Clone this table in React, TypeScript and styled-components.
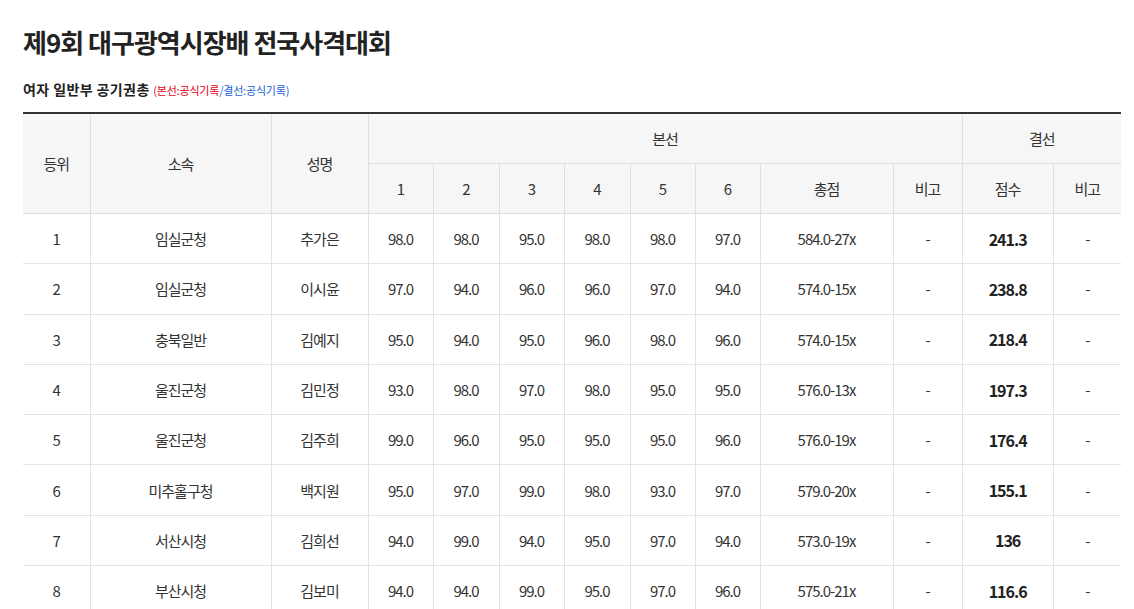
import React from "react";
import styled, { createGlobalStyle } from "styled-components";

const GlobalStyle = createGlobalStyle`
  html, body { margin: 0; padding: 0; background: #fff; }
  body { font-family: "Noto Sans CJK KR", "Noto Sans", sans-serif; color: #333; }
`;

const Page = styled.div`
  padding: 22px 13px 0 23px;
`;

const Title = styled.h1`
  margin: 0;
  font-size: 26px;
  line-height: 40px;
  font-weight: 700;
  color: #222;
  letter-spacing: -1px;
`;

const SubTitle = styled.h2`
  margin: 17px 0 0;
  font-size: 14px;
  line-height: 20px;
  font-weight: 700;
  color: #222;
  letter-spacing: 0.4px;
`;

const Note = styled.span`
  font-size: 11px;
  font-weight: 400;
  letter-spacing: -0.2px;
`;

const Colored = styled.span<{ $tone: "red" | "blue" }>`
  color: ${(p) => (p.$tone === "red" ? "#e60012" : "#1a5fd6")};
`;

const Table = styled.table`
  margin-top: 12px;
  width: 1098px;
  border-collapse: collapse;
  table-layout: fixed;
  border-top: 2px solid #333;
`;

const Th = styled.th`
  background: #f6f6f6;
  font-weight: 400;
  font-size: 15px;
  color: #333;
  letter-spacing: -1px;
  height: 49px;
  padding: 0;
  text-align: center;
  border: 1px solid #dfdfdf;
  border-top: none;
  &:first-child { border-left: none; }
  &:last-child { border-right: none; }
`;

const Td = styled.td<{ $bold?: boolean }>`
  height: 49.3px;
  padding: 0;
  text-align: center;
  font-size: ${(p) => (p.$bold ? "16px" : "15px")};
  font-weight: ${(p) => (p.$bold ? 700 : 400)};
  color: ${(p) => (p.$bold ? "#222" : "#333")};
  letter-spacing: -1px;
  border: 1px solid #e3e3e3;
  &:first-child { border-left: none; }
  &:last-child { border-right: none; }
`;

const widths = [67, 181, 97, 65, 66, 65, 66, 65, 65, 133, 69, 91, 68];

type Row = {
  rank: number;
  team: string;
  name: string;
  s: string[];
  total: string;
  score: string;
};

const rows: Row[] = [
  { rank: 1, team: "임실군청", name: "추가은", s: ["98.0", "98.0", "95.0", "98.0", "98.0", "97.0"], total: "584.0-27x", score: "241.3" },
  { rank: 2, team: "임실군청", name: "이시윤", s: ["97.0", "94.0", "96.0", "96.0", "97.0", "94.0"], total: "574.0-15x", score: "238.8" },
  { rank: 3, team: "충북일반", name: "김예지", s: ["95.0", "94.0", "95.0", "96.0", "98.0", "96.0"], total: "574.0-15x", score: "218.4" },
  { rank: 4, team: "울진군청", name: "김민정", s: ["93.0", "98.0", "97.0", "98.0", "95.0", "95.0"], total: "576.0-13x", score: "197.3" },
  { rank: 5, team: "울진군청", name: "김주희", s: ["99.0", "96.0", "95.0", "95.0", "95.0", "96.0"], total: "576.0-19x", score: "176.4" },
  { rank: 6, team: "미추홀구청", name: "백지원", s: ["95.0", "97.0", "99.0", "98.0", "93.0", "97.0"], total: "579.0-20x", score: "155.1" },
  { rank: 7, team: "서산시청", name: "김희선", s: ["94.0", "99.0", "94.0", "95.0", "97.0", "94.0"], total: "573.0-19x", score: "136" },
  { rank: 8, team: "부산시청", name: "김보미", s: ["94.0", "94.0", "99.0", "95.0", "97.0", "96.0"], total: "575.0-21x", score: "116.6" },
];

export default function App() {
  return (
    <>
      <GlobalStyle />
      <Page>
        <Title>제9회 대구광역시장배 전국사격대회</Title>
        <SubTitle>
          여자 일반부 공기권총{" "}
          <Note>
            <Colored $tone="red">(본선:공식기록</Colored>
            <Colored $tone="blue">/결선:공식기록)</Colored>
          </Note>
        </SubTitle>
        <Table>
          <colgroup>
            {widths.map((w, i) => (
              <col key={i} style={{ width: w }} />
            ))}
          </colgroup>
          <thead>
            <tr>
              <Th rowSpan={2}>등위</Th>
              <Th rowSpan={2}>소속</Th>
              <Th rowSpan={2}>성명</Th>
              <Th colSpan={8}>본선</Th>
              <Th colSpan={2}>결선</Th>
            </tr>
            <tr>
              {["1", "2", "3", "4", "5", "6", "총점", "비고", "점수", "비고"].map((h, i) => (
                <Th key={i}>{h}</Th>
              ))}
            </tr>
          </thead>
          <tbody>
            {rows.map((r) => (
              <tr key={r.rank}>
                <Td>{r.rank}</Td>
                <Td>{r.team}</Td>
                <Td>{r.name}</Td>
                {r.s.map((v, i) => (
                  <Td key={i}>{v}</Td>
                ))}
                <Td>{r.total}</Td>
                <Td>-</Td>
                <Td $bold>{r.score}</Td>
                <Td>-</Td>
              </tr>
            ))}
          </tbody>
        </Table>
      </Page>
    </>
  );
}
